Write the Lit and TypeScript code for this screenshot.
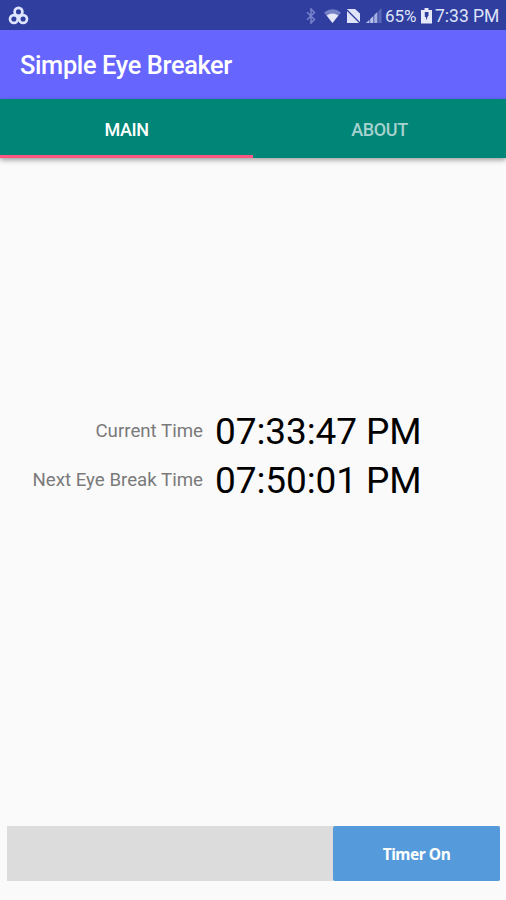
import { LitElement, html, css } from "lit";
import { customElement, state } from "lit/decorators.js";
import { classMap } from "lit/directives/class-map.js";

@customElement("status-bar")
class StatusBar extends LitElement {
  static styles = css`
    :host {
      display: flex;
      align-items: center;
      height: 30px;
      box-sizing: border-box;
      padding: 1px 7px 0 8px;
      background: #303f9f;
      color: #dfe3f8;
      font-size: 17.5px;
      line-height: 30px;
      white-space: nowrap;
    }
    svg { display: block; flex: none; }
    .spacer { flex: 1; }
    .bluetooth { margin-right: 8px; }
    .wifi { margin-right: 5px; }
    .sim { margin-right: 5px; }
    .signal { margin-right: 3px; }
    .percent { width: 32px; font-size: 17px; }
    .battery { margin: 0 3px 0 4px; }
    .clock { width: 64px; }
  `;
  render() {
    return html`
      <svg width="21" height="20" viewBox="0 0 21 20" fill="none" stroke="#dfe5ff" stroke-width="2.7">
        <circle cx="10.5" cy="5.7" r="3.9" /><circle cx="5.9" cy="13" r="3.9" /><circle cx="15.1" cy="13" r="3.9" />
      </svg>
      <div class="spacer"></div>
      <svg class="bluetooth" width="10" height="16" viewBox="0 0 10 16" fill="none" stroke="#7883cb" stroke-width="1.5">
        <path d="M1 4.2L8.5 11.5L5 15V1L8.5 4.5L1 11.8" />
      </svg>
      <svg class="wifi" width="17" height="14" viewBox="0 0 17 14">
        <path fill="#7682c8" d="M0 3.5Q8.5-2.8 17 3.5L8.5 14Z" />
        <path fill="#e6e9fa" d="M2.7 6.5Q8.5 2.6 14.3 6.5L8.5 14Z" />
      </svg>
      <svg class="sim" width="15" height="16" viewBox="0 0 15 16">
        <path fill="#e0e4fa" d="M1 1H9L14 5.5V15H1Z" />
        <path stroke="#303f9f" stroke-width="1.3" d="M0 1L14.5 15.5" />
      </svg>
      <svg class="signal" width="16" height="16" viewBox="0 0 16 16">
        <path fill="#b9c1ec" d="M0 15L3.4 11.7V15ZM4.2 10.9L7.4 7.9V15H4.2Z" />
        <path fill="#a6afe3" d="M8.2 7.1L11.4 4V15H8.2Z" />
        <path fill="#5968b8" d="M12.4 3L15.5 0V15H12.4Z" />
      </svg>
      <span class="percent">65%</span>
      <svg class="battery" width="11" height="16" viewBox="0 0 11 16">
        <path fill="#e6e9fa" d="M3.5 0H7.5V2H11V15.5H0V2H3.5Z" />
        <path fill="#303f9f" d="M3.8 4H7.5V8H7L5 12.5V9H3.8Z" />
      </svg>
      <span class="clock">7:33 PM</span>
    `;
  }
}

@customElement("app-root")
class AppRoot extends LitElement {
  @state() private tab = "MAIN";
  @state() private timerOn = true;

  static styles = css`
    :host {
      display: flex;
      flex-direction: column;
      height: 100vh;
      overflow: hidden;
      background: #fafafa;
      font-family: Roboto, "Liberation Sans", sans-serif;
    }
    status-bar { flex: none; }
    .toolbar {
      flex: none;
      height: 69px;
      padding: 1px 21px 0 20px;
      box-sizing: border-box;
      display: flex;
      align-items: center;
      background: #6666ff;
      color: #fff;
      font-size: 25.4px;
      letter-spacing: -0.36px;
      font-weight: 500;
      white-space: nowrap;
    }
    .tabs {
      flex: none;
      display: grid;
      grid-template-columns: 1fr 1fr;
      height: 59px;
      background: #008577;
      box-shadow: 0 2px 5px rgba(0, 0, 0, 0.38);
    }
    .tab {
      display: flex;
      align-items: center;
      justify-content: center;
      box-sizing: border-box;
      border: 0;
      border-bottom: 3px solid transparent;
      padding: 4px 0 0;
      background: none;
      color: #a6d3ce;
      font: 500 18px Roboto, sans-serif;
      letter-spacing: -0.4px;
    }
    .tab.active { color: #fff; border-bottom-color: #ff5583; }
    .content {
      flex: 1;
      display: grid;
      grid-template-columns: 203px 1fr;
      grid-auto-rows: 49px;
      align-content: center;
      align-items: center;
      column-gap: 12px;
      padding-bottom: 73px;
    }
    .label { text-align: right; color: #7a7a7a; font-size: 18.7px; white-space: nowrap; }
    .time { color: #000; font-size: 37px; letter-spacing: -0.1px; white-space: nowrap; }
    .footer {
      flex: none;
      display: flex;
      height: 55px;
      margin: 0 6px 19px 7px;
      background: #dcdcdc;
    }
    .toggle {
      width: 167px;
      margin-left: auto;
      padding: 1px 0 0;
      border: 0;
      border-radius: 2px;
      background: #559ada;
      color: #fff;
      font: 700 15.5px "Noto Sans", sans-serif;
      letter-spacing: -0.45px;
    }
  `;

  render() {
    const rows = [
      ["Current Time", "07:33:47 PM"],
      ["Next Eye Break Time", "07:50:01 PM"],
    ];
    return html`
      <status-bar></status-bar>
      <header class="toolbar"><span>Simple Eye Breaker</span></header>
      <nav class="tabs">
        ${["MAIN", "ABOUT"].map(
          (name) => html`<button
            class=${classMap({ tab: true, active: this.tab === name })}
            @click=${() => (this.tab = name)}
          >${name}</button>`
        )}
      </nav>
      <main class="content">
        ${rows.map(([label, time]) => html`<span class="label">${label}</span><span class="time">${time}</span>`)}
      </main>
      <footer class="footer">
        <button class="toggle" @click=${() => (this.timerOn = !this.timerOn)}>
          ${this.timerOn ? "Timer On" : "Timer Off"}
        </button>
      </footer>
    `;
  }
}
